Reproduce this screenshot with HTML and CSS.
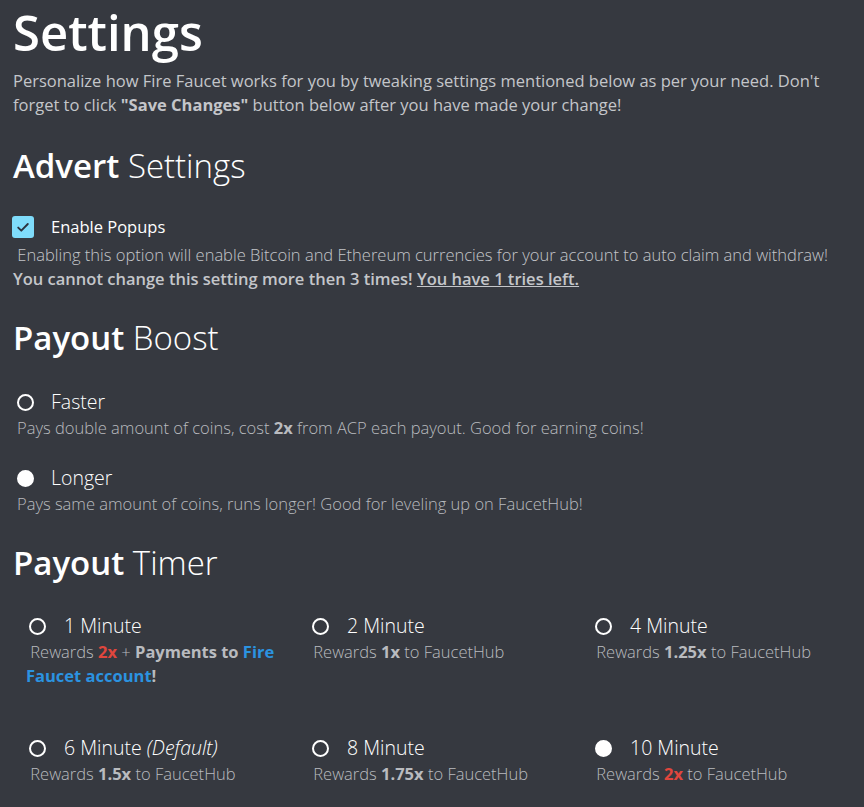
FILE: index.html
```html
<!DOCTYPE html>
<html>
<head>
<meta charset="utf-8">
<link rel="stylesheet" href="styles.css">
</head>
<body>
<main class="page">
  <h1 class="title">Settings</h1>
  <p class="intro">Personalize how Fire Faucet works for you by tweaking settings mentioned below as per your need. Don't forget to click <b>"Save Changes"</b> button below after you have made your change!</p>

  <h2 class="section"><b>Advert</b> Settings</h2>
  <div class="check-row">
    <span class="checkbox"><svg viewBox="0 0 22 22" width="22" height="22"><path d="M6.2 11.6l3.1 3.1L15.8 8" fill="none" stroke="#2b3340" stroke-width="1.9" stroke-linecap="round" stroke-linejoin="round"/></svg></span>
    <span class="check-label">Enable Popups</span>
  </div>
  <p class="note">&nbsp;Enabling this option will enable Bitcoin and Ethereum currencies for your account to auto claim and withdraw!<br><b>You cannot change this setting more then 3 times! <u>You have 1 tries left.</u></b></p>

  <h2 class="section"><b>Payout</b> Boost</h2>
  <div class="boost">
    <div class="opt">
      <div class="opt-head"><span class="radio"></span><span class="opt-label">Faster</span></div>
      <div class="opt-desc">Pays double amount of coins, cost <b>2x</b> from ACP each payout. Good for earning coins!</div>
    </div>
    <div class="opt">
      <div class="opt-head"><span class="radio on"></span><span class="opt-label">Longer</span></div>
      <div class="opt-desc">Pays same amount of coins, runs longer! Good for leveling up on FaucetHub!</div>
    </div>
  </div>

  <h2 class="section"><b>Payout</b> Timer</h2>
  <div class="timer">
    <div class="topt">
      <div class="opt-head"><span class="radio"></span><span class="opt-label">1 Minute</span></div>
      <div class="opt-desc">&nbsp;Rewards <b class="red">2x</b> + <b>Payments to <span class="blue">Fire Faucet account</span>!</b></div>
    </div>
    <div class="topt">
      <div class="opt-head"><span class="radio"></span><span class="opt-label">2 Minute</span></div>
      <div class="opt-desc">&nbsp;Rewards <b>1x</b> to FaucetHub</div>
    </div>
    <div class="topt">
      <div class="opt-head"><span class="radio"></span><span class="opt-label">4 Minute</span></div>
      <div class="opt-desc">&nbsp;Rewards <b>1.25x</b> to FaucetHub</div>
    </div>
    <div class="topt">
      <div class="opt-head"><span class="radio"></span><span class="opt-label">6 Minute <i>(Default)</i></span></div>
      <div class="opt-desc">&nbsp;Rewards <b>1.5x</b> to FaucetHub</div>
    </div>
    <div class="topt">
      <div class="opt-head"><span class="radio"></span><span class="opt-label">8 Minute</span></div>
      <div class="opt-desc">&nbsp;Rewards <b>1.75x</b> to FaucetHub</div>
    </div>
    <div class="topt">
      <div class="opt-head"><span class="radio on"></span><span class="opt-label">10 Minute</span></div>
      <div class="opt-desc">&nbsp;Rewards <b class="red">2x</b> to FaucetHub</div>
    </div>
  </div>
</main>
</body>
</html>
```

FILE: styles.css
```css
html, body {
  margin: 0;
  padding: 0;
  background: #363940;
}
body {
  font-family: "Open Sans", "Noto Sans", sans-serif;
  color: #c4c6ca;
  height: 807px;
  overflow: hidden;
}
.page {
  padding: 2px 13px 0;
}
.title {
  margin: 0;
  font-size: 49px;
  line-height: 60px;
  font-weight: 600;
  color: #ffffff;
}
.intro {
  margin: 7px 0 0;
  font-size: 16.5px;
  line-height: 24px;
  font-weight: 400;
  color: #c4c6ca;
}
.intro b { font-weight: 700; }
.section {
  margin: 27px 0 0;
  font-size: 33px;
  line-height: 40px;
  font-weight: 300;
  color: #ffffff;
}
.section b { font-weight: 600; }
.intro + .section { margin-top: 29px; }
.check-row {
  display: flex;
  align-items: center;
  gap: 17px;
  margin-top: 30px;
  line-height: 22px;
}
.checkbox {
  width: 22px;
  height: 22px;
  border-radius: 3px;
  background: #7fdcfb;
  display: flex;
  align-items: center;
  justify-content: center;
  margin-left: -1px;
}
.checkbox svg { width: 22px; height: 22px; }
.check-label {
  font-size: 16.5px;
  font-weight: 400;
  color: #ffffff;
}
.note {
  margin: 5px 0 0;
  font-size: 16.5px;
  line-height: 24px;
  font-weight: 300;
  color: #c4c6ca;
}
.note b { font-weight: 600; }
.boost {
  margin-top: 31px;
  padding-left: 4px;
  display: flex;
  flex-direction: column;
  gap: 25px;
}
.opt-head {
  display: flex;
  align-items: center;
  gap: 17px;
  height: 26px;
}
.radio {
  width: 17px;
  height: 17px;
  border: 2px solid #ffffff;
  border-radius: 50%;
  box-sizing: border-box;
  flex: none;
}
.radio.on { background: #ffffff; }
.opt-label {
  font-size: 19.5px;
  line-height: 26px;
  font-weight: 300;
  color: #ffffff;
}
.opt-label i { font-weight: 300; }
.opt-desc {
  margin-top: 1px;
  font-size: 16.5px;
  line-height: 24px;
  font-weight: 300;
  color: #b9bbbf;
}
.opt-desc b { font-weight: 700; }
.timer {
  display: grid;
  grid-template-columns: repeat(3, 283px);
  margin-top: 30px;
  margin-left: 13px;
  row-gap: 47px;
}
.topt {
  padding-right: 24px;
}
.topt .opt-head { padding-left: 3px; gap: 18px; }
.red { color: #e0463d; }
.blue { color: #2b93e0; }
```
